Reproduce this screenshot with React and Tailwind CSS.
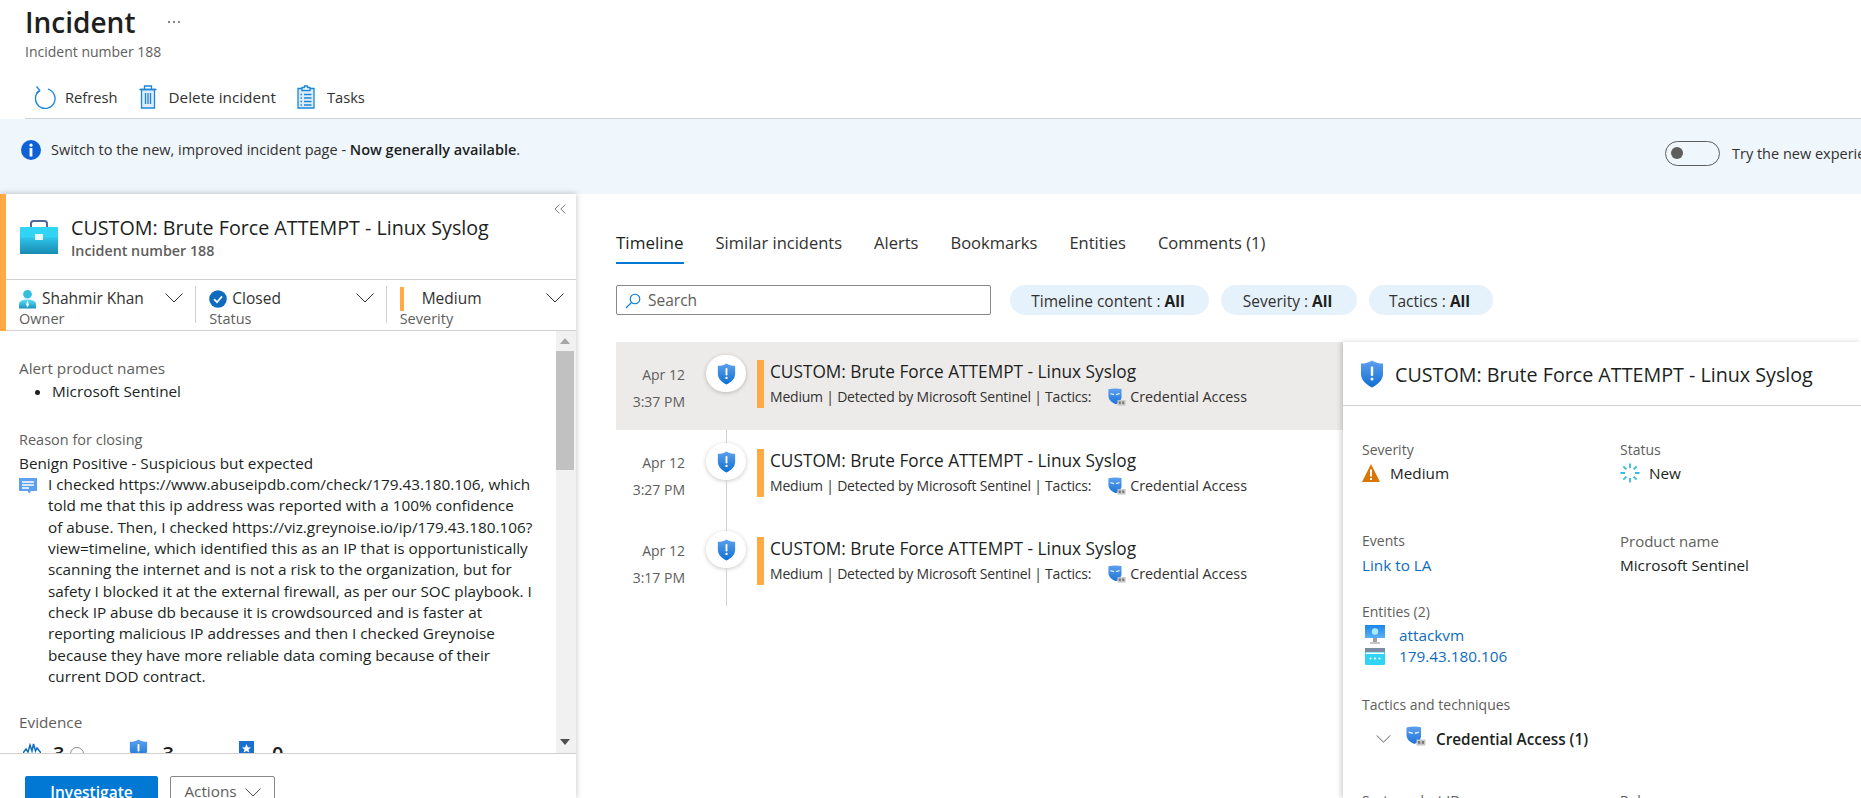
import { ChevronsLeft } from 'lucide-react';

const ALERTS = [
  { date: 'Apr 12', time: '3:37 PM', selected: true },
  { date: 'Apr 12', time: '3:27 PM' },
  { date: 'Apr 12', time: '3:17 PM' },
];

const COMMENT_LINES = [
  'I checked https://www.abuseipdb.com/check/179.43.180.106, which',
  'told me that this ip address was reported with a 100% confidence',
  'of abuse. Then, I checked https://viz.greynoise.io/ip/179.43.180.106?',
  'view=timeline, which identified this as an IP that is opportunistically',
  'scanning the internet and is not a risk to the organization, but for',
  'safety I blocked it at the external firewall, as per our SOC playbook. I',
  'check IP abuse db because it is crowdsourced and is faster at',
  'reporting malicious IP addresses and then I checked Greynoise',
  'because they have more reliable data coming because of their',
  'current DOD contract.',
];

const TABS = ['Similar incidents', 'Alerts', 'Bookmarks', 'Entities', 'Comments (1)'];

const Chevron = ({ className }) => (
  <svg viewBox="0 0 18 10" className={className} fill="none" stroke="#323130" strokeWidth="1">
    <path d="M0.5 0.5L9 9L17.5 0.5" />
  </svg>
);

const Shield = ({ className }) => (
  <svg viewBox="0 0 24 28" className={className}>
    <defs>
      <linearGradient id="shieldFill" x1="0" y1="0" x2="0" y2="1">
        <stop offset="0" stopColor="#5ea0ef" />
        <stop offset="1" stopColor="#0f6fd1" />
      </linearGradient>
    </defs>
    <path d="M12 0.5C9.5 2.5 5 3.6 1 3.6V14C1 20.5 7 25 12 27.5C17 25 23 20.5 23 14V3.6C19 3.6 14.5 2.5 12 0.5Z" fill="url(#shieldFill)" />
    <rect x="10.8" y="6.5" width="2.4" height="9.5" rx="1" fill="#fff" />
    <circle cx="12" cy="19" r="1.5" fill="#fff" />
  </svg>
);

const Mask = ({ className }) => (
  <svg viewBox="0 0 20 20" className={className}>
    <defs>
      <linearGradient id="maskFill" x1="0" y1="0" x2="0" y2="1">
        <stop offset="0" stopColor="#5ea0ef" />
        <stop offset="1" stopColor="#1b74d8" />
      </linearGradient>
    </defs>
    <path d="M0.5 1.5C5 0.2 10 0.2 15 1.2V10C15 13.5 12 16.5 8.5 18C4.5 16.5 0.5 13.5 0.5 9Z" fill="url(#maskFill)" />
    <path d="M2.5 5.5L6.8 6.6V8L2.8 7ZM13 5.5L8.8 6.6V8L12.8 7Z" fill="#e8f3ff" />
    <rect x="10.5" y="13.5" width="9" height="6" fill="#c8c6c4" />
    <rect x="12" y="15" width="2.2" height="2.8" fill="#7a7a7a" />
    <rect x="15.8" y="15" width="2.2" height="2.8" fill="#7a7a7a" />
  </svg>
);

const Briefcase = ({ className }) => (
  <svg viewBox="0 0 38 34" className={className}>
    <defs>
      <linearGradient id="caseFill" x1="0" y1="0" x2="0" y2="1">
        <stop offset="0" stopColor="#2fc6ea" />
        <stop offset="1" stopColor="#198ab3" />
      </linearGradient>
    </defs>
    <path d="M11 8V3.5C11 2 12 1 13.5 1H24.5C26 1 27 2 27 3.5V8" fill="none" stroke="#50699a" strokeWidth="2" />
    <rect x="0" y="17" width="38" height="17" fill="url(#caseFill)" />
    <path d="M1 7H37C37.6 7 38 7.4 38 8V17.5H0V8C0 7.4 0.4 7 1 7Z" fill="#32d4f5" />
    <rect x="15" y="14" width="8" height="6" fill="#e8f8fd" />
  </svg>
);

const Person = ({ className }) => (
  <svg viewBox="0 0 18 20" className={className}>
    <defs>
      <linearGradient id="personFill" x1="0" y1="0" x2="0" y2="1">
        <stop offset="0" stopColor="#5ee0f5" />
        <stop offset="1" stopColor="#1b93c0" />
      </linearGradient>
    </defs>
    <circle cx="9" cy="5" r="4.6" fill="#32bedd" />
    <path d="M0 20V15.5C0 12.5 3.5 10.5 9 10.5C14.5 10.5 18 12.5 18 15.5V20Z" fill="url(#personFill)" />
    <path d="M9 11L10.5 16L9 19L7.5 16Z" fill="#fff" />
  </svg>
);

const Refresh = () => (
  <svg viewBox="0 0 22 26" className="h-[26px] w-[22px]" fill="none" stroke="#1a86d9" strokeWidth="1.3">
    <path d="M14 5.2A9.8 9.8 0 1 1 5.6 6.6" />
    <path d="M2.5 2.5L5.8 6.4L2.2 9.4" />
  </svg>
);

const Trash = () => (
  <svg viewBox="0 0 18 24" className="h-[24px] w-[18px]" fill="none" stroke="#1a86d9" strokeWidth="1.3">
    <path d="M2.5 4.5V23H15.5V4.5Z" fill="#deecf9" />
    <path d="M0.5 4.5H17.5M5.5 4.5V1H12.5V4.5M6.5 8V19M9 8V19M11.5 8V19" />
  </svg>
);

const Tasks = () => (
  <svg viewBox="0 0 18 24" className="h-[24px] w-[18px]" fill="none" stroke="#1a86d9" strokeWidth="1.3">
    <path d="M1 3.5H17V23H1Z" fill="#deecf9" />
    <path d="M5 5.5V2.5H7.5V1H10.5V2.5H13V5.5Z" fill="#fff" />
    <path d="M3.5 9.5H5M7 9.5H14.5M3.5 13H5M7 13H14.5M3.5 16.5H5M7 16.5H14.5M3.5 20H5M7 20H14.5" />
  </svg>
);

const InfoIcon = () => (
  <svg viewBox="0 0 20 20" className="size-5 shrink-0">
    <circle cx="10" cy="10" r="10" fill="#0f62d6" />
    <circle cx="10" cy="5.2" r="1.6" fill="#fff" />
    <rect x="8.6" y="8" width="2.8" height="8.5" fill="#fff" />
  </svg>
);

const ClosedIcon = () => (
  <svg viewBox="0 0 18 20" className="h-5 w-[18px]">
    <circle cx="9" cy="10" r="8.8" fill="#0f6cbd" />
    <path d="M5 10.2L8 13.2L13 7.4" fill="none" stroke="#fff" strokeWidth="1.7" />
  </svg>
);

const CommentIcon = () => (
  <svg viewBox="0 0 18 16" className="h-4 w-[18px]">
    <path d="M0 0H18V13H12L10 15.5L8.5 13H0Z" fill="#5ea0ef" />
    <path d="M3 4H15M3 7H15M3 10H10" stroke="#fff" strokeWidth="1.3" />
  </svg>
);

const Warning = () => (
  <svg viewBox="0 0 18 18" className="size-[18px]">
    <path d="M9 0L18 18H0Z" fill="#d97706" />
    <rect x="8" y="5.5" width="2" height="7" fill="#fff" />
    <rect x="8" y="14" width="2" height="2" fill="#fff" />
  </svg>
);

const NewIcon = () => (
  <svg viewBox="0 0 20 20" className="size-5" stroke="#32bedd" strokeWidth="1.8">
    <path d="M10 0.5V5M10 15V19.5M0.5 10H5M15 10H19.5M3.3 3.3L6.4 6.4M13.6 13.6L16.7 16.7M3.3 16.7L6.4 13.6M13.6 6.4L16.7 3.3" />
  </svg>
);

const Monitor = () => (
  <svg viewBox="0 0 20 20" className="size-5">
    <defs>
      <linearGradient id="screenFill" x1="0" y1="0" x2="0" y2="1">
        <stop offset="0" stopColor="#1e86e6" />
        <stop offset="1" stopColor="#5ab0f5" />
      </linearGradient>
    </defs>
    <rect x="0" y="0" width="20" height="13" fill="url(#screenFill)" />
    <circle cx="10" cy="6.5" r="3.2" fill="#a8ecfb" />
    <rect x="8" y="13" width="4" height="4" fill="#a19f9d" />
    <rect x="5" y="17" width="10" height="2" fill="#c8c6c4" />
  </svg>
);

const IpIcon = () => (
  <svg viewBox="0 0 20 17" className="h-[17px] w-5">
    <rect x="0" y="0" width="20" height="17" rx="1" fill="#32d4f5" />
    <rect x="0" y="0" width="20" height="4" fill="#7a8ca3" />
    <rect x="1" y="4.5" width="18" height="1.5" fill="#fff" />
    <circle cx="5.5" cy="10.5" r="1.1" fill="#fff" />
    <circle cx="10" cy="10.5" r="1.1" fill="#fff" />
    <circle cx="14.5" cy="10.5" r="1.1" fill="#fff" />
  </svg>
);

const Search = () => (
  <svg viewBox="0 0 16 16" className="size-4" fill="none" stroke="#0078d4" strokeWidth="1.1">
    <circle cx="10" cy="6" r="4.8" />
    <path d="M6.5 9.5L1 15" />
  </svg>
);

const Pulse = () => (
  <svg viewBox="0 0 18 10" className="h-[10px] w-[18px]" fill="none" stroke="#0f6cbd" strokeWidth="1.5">
    <path d="M0 10L3 6L5 9L7 2L9 8L10.5 1L12.5 8L14 5L18 10" />
  </svg>
);

const StarBadge = () => (
  <svg viewBox="0 0 15 15" className="ml-[65px] mt-[2px] size-[15px]">
    <rect width="15" height="15" fill="#1a6fd1" />
    <path d="M7.5 3L8.8 6.2L12 6.4L9.5 8.5L10.4 11.6L7.5 9.9L4.6 11.6L5.5 8.5L3 6.4L6.2 6.2Z" fill="#fff" />
  </svg>
);

const Dropdown = ({ icon, value, label, gap }) => (
  <div className="flex flex-1 items-start pl-[13px] pt-[9px]">
    <div className="flex-1">
      <div className={`flex h-5 items-center text-[15.5px] font-medium text-[#323130] ${gap}`}>
        {icon}
        {value}
      </div>
      <div className="mt-[1px] text-[14.5px] leading-[18px] text-[#605e5c]">{label}</div>
    </div>
    <Chevron className="mr-[12px] mt-[4px] h-[10px] w-[18px]" />
  </div>
);

const LeftPanel = () => (
  <aside className="flex w-[576px] shrink-0 flex-col bg-white shadow-[0_0_6px_rgba(0,0,0,0.25)]">
    <div className="border-l-[6px] border-[#ffaa44]">
      <div className="flex h-[86px] items-start border-b border-[#d2d0ce] pl-[14px] pr-[6px]">
        <Briefcase className="mt-[26px] h-[34px] w-[38px] shrink-0" />
        <div className="ml-[13px] flex-1 pt-[21px]">
          <div className="whitespace-nowrap text-[19.7px] font-medium leading-[26px] text-[#201f1e]">CUSTOM: Brute Force ATTEMPT - Linux Syslog</div>
          <div className="text-[14.3px] font-semibold leading-[20px] text-[#605e5c]">Incident number 188</div>
        </div>
        <ChevronsLeft className="mt-[5px] size-[20px] text-[#605e5c]" strokeWidth={1} />
      </div>
      <div className="flex h-[51px] border-b border-[#d2d0ce]">
        <Dropdown icon={<Person className="h-5 w-[17px]" />} value="Shahmir Khan" label="Owner" gap="gap-[6px]" />
        <div className="mt-[6px] h-[37px] w-px bg-[#d2d0ce]" />
        <Dropdown icon={<ClosedIcon />} value="Closed" label="Status" gap="gap-[5px]" />
        <div className="mt-[6px] h-[37px] w-px bg-[#d2d0ce]" />
        <Dropdown icon={<span className="h-[24px] w-[4px] bg-[#ffaa44]" />} value="Medium" label="Severity" gap="gap-[18px]" />
      </div>
    </div>

    <div className="flex min-h-0 flex-1">
      <div className="min-w-0 flex-1 overflow-hidden whitespace-nowrap pl-[19px] pt-[27px] text-[15.3px] leading-[20px]">
        <div className="text-[#605e5c]">Alert product names</div>
        <ul className="mt-[3px] list-disc pl-[33px] text-[#201f1e]">
          <li>Microsoft Sentinel</li>
        </ul>
        <div className="mt-[29px] text-[14.5px] text-[#605e5c]">Reason for closing</div>
        <div className="mt-[3px] text-[#201f1e]">Benign Positive - Suspicious but expected</div>
        <div className="mt-[1px] flex">
          <div className="w-[29px] shrink-0 pt-[4px]">
            <CommentIcon />
          </div>
          <div className="leading-[21.35px] text-[#201f1e]">
            {COMMENT_LINES.map((line) => (
              <div key={line}>{line}</div>
            ))}
          </div>
        </div>
        <div className="mt-[25px] text-[#605e5c]">Evidence</div>
        <div className="mt-[7px] flex items-start text-[20px] font-semibold leading-[26px] text-[#201f1e]">
          <span className="ml-[4px] mt-[4px]"><Pulse /></span>
          <span className="ml-[12px] mt-[2px]">3</span>
          <span className="ml-[6px] mt-[8px] size-[14px] rounded-full border border-[#8a8886]" />
          <Shield className="ml-[45px] h-[22px] w-[19px]" />
          <span className="ml-[14px] mt-[2px]">3</span>
          <StarBadge />
          <span className="ml-[18px] mt-[2px]">0</span>
        </div>
      </div>
      <div className="flex w-[20px] shrink-0 flex-col items-start bg-[#f1f1f1]">
        <svg viewBox="0 0 10 6" className="ml-[4px] mt-[7px] h-[6px] w-[10px]"><path d="M5 0L10 6H0Z" fill="#a6a6a6" /></svg>
        <div className="mt-[7px] h-[119px] w-[18px] bg-[#c1c1c1]" />
        <svg viewBox="0 0 10 6" className="mb-[8px] ml-[4px] mt-auto h-[6px] w-[10px]"><path d="M0 0H10L5 6Z" fill="#505050" /></svg>
      </div>
    </div>

    <div className="flex h-[45px] gap-3 border-t border-[#d2d0ce] pl-[25px] pt-[22px]">
      <button className="h-[32px] w-[133px] rounded-[2px] bg-[#0078d4] text-[15.5px] font-semibold leading-[30px] text-white">Investigate</button>
      <button className="flex h-[32px] w-[105px] items-start justify-center gap-2 rounded-[2px] border border-[#8a8886] pt-[3px] text-[15.3px] text-[#605e5c]">
        Actions
        <Chevron className="mt-[8px] h-[9px] w-[16px]" />
      </button>
    </div>
  </aside>
);

const AlertRow = ({ alert }) => (
  <div className={`flex h-[88px] ${alert.selected ? 'bg-[#edebe9]' : ''}`}>
    <div className="w-[69px] shrink-0 pt-[23px] text-right leading-[20px] text-[#605e5c]">
      <div>{alert.date}</div>
      <div className="mt-[7px]">{alert.time}</div>
    </div>
    <div className="ml-[21px] flex w-[40px] shrink-0 flex-col items-center">
      <div className={`h-[13px] w-px ${alert.selected ? '' : 'bg-[#d2d0ce]'}`} />
      <div className="flex h-[37px] w-[40px] items-center justify-center rounded-full bg-white shadow-[0_1px_4px_rgba(0,0,0,0.22)]">
        <Shield className="h-[22px] w-[19px]" />
      </div>
      <div className={`w-px flex-1 ${alert.selected ? '' : 'bg-[#d2d0ce]'}`} />
    </div>
    <div className={`ml-[11px] h-[48px] w-[7px] shrink-0 bg-[#ffaa44] ${alert.selected ? 'mt-[18px]' : 'mt-[19px]'}`} />
    <div className={`ml-[6px] whitespace-nowrap ${alert.selected ? 'pt-[18px]' : 'pt-[19px]'}`}>
      <div className="text-[17.25px] font-medium leading-[24px] text-[#201f1e]">CUSTOM: Brute Force ATTEMPT - Linux Syslog</div>
      <div className="mt-[3px] flex h-[20px] items-center leading-[20px] tracking-[-0.015em] text-[#323130]">
        Medium | Detected by Microsoft Sentinel | Tactics:
        <Mask className="ml-[17px] mr-[4px] size-[18px]" />
        <span className="text-[14.3px] tracking-normal">Credential Access</span>
      </div>
    </div>
  </div>
);

const DetailPane = () => (
  <section className="flex-1 whitespace-nowrap bg-white leading-[20px] shadow-[-2px_0_5px_rgba(0,0,0,0.18)]">
    <div className="flex h-[64px] items-center border-b border-[#d2d0ce] pl-[17px]">
      <Shield className="h-[28px] w-[24px]" />
      <div className="ml-[11px] pt-[2px] text-[19.7px] font-medium text-[#201f1e]">CUSTOM: Brute Force ATTEMPT - Linux Syslog</div>
    </div>
    <div className="pl-[19px] pt-[34px]">
      <div className="grid grid-cols-[258px_1fr] gap-y-[48px]">
        <div>
          <div className="text-[#605e5c]">Severity</div>
          <div className="mt-[3px] flex items-center gap-[10px] text-[15.3px] text-[#201f1e]"><Warning />Medium</div>
        </div>
        <div>
          <div className="text-[#605e5c]">Status</div>
          <div className="mt-[3px] flex items-center gap-[9px] text-[15.3px] text-[#201f1e]"><NewIcon />New</div>
        </div>
        <div>
          <div className="text-[#605e5c]">Events</div>
          <div className="mt-1 text-[15.3px] text-[#0f6cbd]">Link to LA</div>
        </div>
        <div>
          <div className="text-[15px] text-[#605e5c]">Product name</div>
          <div className="mt-1 text-[15.3px] text-[#201f1e]">Microsoft Sentinel</div>
        </div>
      </div>
      <div className="mt-[27px] text-[#605e5c]">Entities (2)</div>
      <div className="mt-[3px] flex items-center pl-[3px] text-[15.3px] text-[#0f6cbd]">
        <Monitor />
        <span className="ml-[14px]">attackvm</span>
      </div>
      <div className="mt-[1px] flex items-center pl-[3px] text-[15.3px] text-[#0f6cbd]">
        <IpIcon />
        <span className="ml-[14px]">179.43.180.106</span>
      </div>
      <div className="mt-[29px] text-[#605e5c]">Tactics and techniques</div>
      <div className="mt-[11px] flex items-center pl-[14px]">
        <Chevron className="h-[8px] w-[15px]" />
        <Mask className="mb-[6px] ml-[15px] size-[20px]" />
        <span className="ml-[10px] text-[15.3px] font-semibold text-[#201f1e]">Credential Access (1)</span>
      </div>
      <div className="mt-[39px] grid grid-cols-[258px_1fr] text-[#605e5c]">
        <div>System alert ID</div>
        <div>Rule name</div>
      </div>
    </div>
  </section>
);

const App = () => {
  return (
    <div className="h-[798px] w-full overflow-hidden bg-white font-['Open_Sans',sans-serif] text-[14px] text-[#323130]">
      {/* Page header */}
      <header className="h-[119px] pl-[25px]">
        <div className="flex h-[119px] flex-col border-b border-[#d2d0ce]">
          <div className="flex items-center pt-[4px]">
            <h1 className="text-[28px] font-semibold leading-[36px] text-[#201f1e]">Incident</h1>
            <span className="ml-[33px] flex gap-[3px]">
              <i className="size-[2px] rounded-full bg-[#605e5c]" />
              <i className="size-[2px] rounded-full bg-[#605e5c]" />
              <i className="size-[2px] rounded-full bg-[#605e5c]" />
            </span>
          </div>
          <div className="mt-[2px] leading-[20px] text-[#605e5c]">Incident number 188</div>
          <div className="mt-[15px] flex h-[40px] items-center pl-[9px] text-[14.7px] text-[#323130]">
            <Refresh />
            <span className="ml-[9px]">Refresh</span>
            <span className="ml-[21px]"><Trash /></span>
            <span className="ml-[12px] text-[15.3px]">Delete incident</span>
            <span className="ml-[21px]"><Tasks /></span>
            <span className="ml-[12px]">Tasks</span>
          </div>
        </div>
      </header>

      {/* Preview banner */}
      <div className="flex h-[75px] whitespace-nowrap bg-[#eff6fc] pl-[21px] text-[14.5px]">
        <div className="flex h-[62px] flex-1 items-center gap-[10px]">
          <InfoIcon />
          <span>Switch to the new, improved incident page - <b className="font-semibold text-[#201f1e]">Now generally available</b>.</span>
        </div>
        <div className="flex h-[68px] w-[196px] shrink-0 items-center">
          <span className="flex h-[25px] w-[55px] shrink-0 items-center rounded-full border border-[#605e5c] pl-[5px]">
            <i className="size-[12px] rounded-full bg-[#605e5c]" />
          </span>
          <span className="ml-[12px] pt-[2px]">Try the new experience</span>
        </div>
      </div>

      <div className="flex h-[604px]">
        <LeftPanel />
        <main className="flex min-w-0 flex-1 flex-col pl-[40px]">
          <nav className="flex h-[70px] items-start whitespace-nowrap pt-[39px] text-[16.5px] leading-[20px] text-[#323130]">
            <div className="h-[31px] border-b-2 border-[#0078d4] text-[17px] font-medium text-[#201f1e]">Timeline</div>
            {TABS.map((tab) => (
              <div key={tab} className="ml-[32px]">{tab}</div>
            ))}
          </nav>
          <div className="mt-[21px] flex h-[30px] items-center whitespace-nowrap text-[15.5px]">
            <div className="flex h-[30px] w-[375px] items-center gap-[7px] rounded-[2px] border border-[#8a8886] pl-[8px] pt-[1px] text-[#605e5c]">
              <Search />
              Search
            </div>
            <div className="ml-[19px] flex h-[30px] w-[199px] items-center justify-center rounded-full bg-[#e6f2fb] pr-[3px] pt-[3px]">Timeline content :&nbsp;<b className="font-bold text-[#201f1e]">All</b></div>
            <div className="ml-[12px] flex h-[30px] w-[136px] items-center justify-center rounded-full bg-[#e6f2fb] pr-[3px] pt-[3px]">Severity :&nbsp;<b className="font-bold text-[#201f1e]">All</b></div>
            <div className="ml-[12px] flex h-[30px] w-[124px] items-center justify-center rounded-full bg-[#e6f2fb] pr-[3px] pt-[3px]">Tactics :&nbsp;<b className="font-bold text-[#201f1e]">All</b></div>
          </div>
          <div className="mt-[27px] flex min-h-0 flex-1">
            <div className="w-[727px] shrink-0">
              {ALERTS.map((alert) => (
                <AlertRow key={alert.time} alert={alert} />
              ))}
            </div>
            <DetailPane />
          </div>
        </main>
      </div>
    </div>
  );
};

export default App;
